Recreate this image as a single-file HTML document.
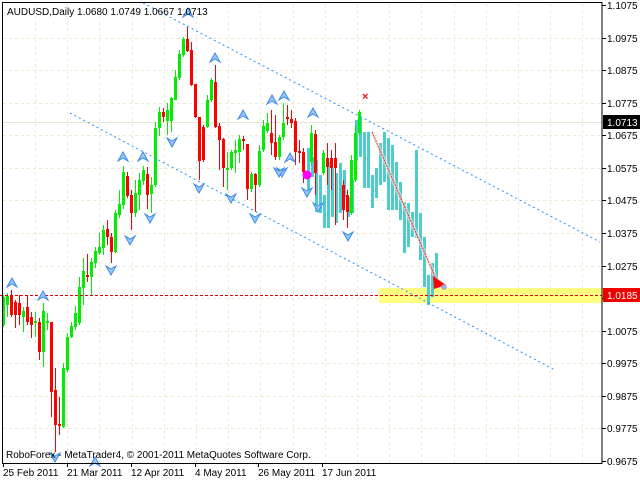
<!DOCTYPE html>
<html><head><meta charset="utf-8"><style>
html,body{margin:0;padding:0;background:#fff;width:640px;height:480px;overflow:hidden}
svg{display:block}
text{font-family:"Liberation Sans",sans-serif;font-size:10px;fill:#000}
</style></head><body>
<svg id="s" width="640" height="480" xmlns="http://www.w3.org/2000/svg">
<g id="grid" stroke="#ecebd2" stroke-width="1" stroke-dasharray="3,3"></g>
<rect x="379" y="288" width="223" height="15" fill="#ffff80"/>
<line x1="2" y1="122.5" x2="602" y2="122.5" stroke="#e6e6d0"/>
<g id="cy" fill="#4ccccc"></g>
<g id="cd"></g>
<line x1="143" y1="3" x2="600" y2="242" stroke="#1e90ff" stroke-dasharray="2,3"/>
<line x1="70" y1="113" x2="555" y2="370" stroke="#1e90ff" stroke-dasharray="2,3"/>
<line x1="0" y1="295.5" x2="602" y2="295.5" stroke="#e00000" stroke-dasharray="3,2"/>
<line x1="372" y1="132" x2="437" y2="281" stroke="#e8e8d8" stroke-width="4" opacity="0.6"/>
<line x1="372" y1="132" x2="437" y2="281" stroke="#ff2040" stroke-dasharray="2,1"/>
<polygon points="433,276 446,285 434,289" fill="#ff0000"/>
<circle cx="444" cy="287" r="3" fill="#9aa0c8" opacity="0.8"/>
<text x="362" y="100" style="font-size:11px;font-weight:bold;fill:#ee1111">×</text>
<circle cx="307" cy="175" r="4.5" fill="#ff00ff"/>
<g id="ar"></g>
<rect x="2.5" y="2.5" width="599.5" height="461" fill="none" stroke="#000"/>
<text x="7" y="15">AUDUSD,Daily  1.0680 1.0749 1.0667 1.0713</text>
<text x="6" y="458">RoboForex - MetaTrader4, © 2001-2011 MetaQuotes Software Corp.</text>
<g id="ax"></g>
<rect x="603" y="115" width="37" height="14" fill="#000"/>
<text x="607" y="126" style="fill:#fff">1.0713</text>
<rect x="603" y="288" width="37" height="14" fill="#ee0000"/>
<text x="607" y="299" style="fill:#fff">1.0185</text>
</svg>
<script>
var NS="http://www.w3.org/2000/svg";
function el(p,t,a){var e=document.createElementNS(NS,t);for(var k in a)e.setAttribute(k,a[k]);document.getElementById(p).appendChild(e);return e;}
var labels=["1.1075","1.0975","1.0875","1.0775","1.0675","1.0575","1.0475","1.0375","1.0275","1.0175","1.0075","0.9975","0.9875","0.9775","0.9675"];
for(var i=0;i<labels.length;i++){var y=Math.round(5+i*32.57);
 if(i>0&&i<14)el("grid","line",{x1:3,y1:y+.5,x2:601,y2:y+.5});
 el("ax","line",{x1:602,y1:y+.5,x2:606,y2:y+.5,stroke:"#000"});
 if(i!=9){var t=el("ax","text",{x:607,y:y+4});t.textContent=labels[i];}}
for(var x=35;x<600;x+=32.2){el("grid","line",{x1:Math.round(x)+.5,y1:4,x2:Math.round(x)+.5,y2:463});}
var dates=[["25 Feb 2011",3],["21 Mar 2011",67],["12 Apr 2011",131],["4 May 2011",195],["26 May 2011",258],["17 Jun 2011",322]];
dates.forEach(function(d){var t=el("ax","text",{x:d[1],y:476});t.textContent=d[0];el("ax","line",{x1:d[1]+.5,y1:463,x2:d[1]+.5,y2:467,stroke:"#000"});});
var C=[[3,297,325,295,327,1],[7,296,305,293,317,1],[11,296,315,290,317,0],[15,302,315,300,328,0],[19,303,315,295,325,0],[23,311,317,307,332,1],[27,307,322,295,325,0],[31,317,325,312,338,0],[35,321,323,312,337,1],[39,322,352,318,360,0],[43,311,352,303,367,1],[47,321,323,313,330,1],[51,322,392,322,417,0],[55,390,425,368,452,0],[59,424,426,397,435,0],[63,368,427,363,428,1],[67,337,370,333,372,1],[71,326,337,322,338,1],[75,313,327,306,330,1],[79,287,323,277,325,1],[83,271,288,258,305,1],[87,275,277,254,282,0],[91,262,277,258,295,1],[95,251,263,247,268,1],[99,247,253,233,255,1],[103,230,248,225,255,1],[107,229,237,220,245,0],[111,237,252,233,263,0],[115,213,252,210,253,1],[119,204,215,190,218,1],[123,172,205,166,209,1],[127,176,196,172,198,0],[131,195,213,190,230,0],[135,193,213,180,217,1],[139,180,195,173,210,1],[143,170,181,166,185,1],[147,174,195,167,209,0],[151,185,194,177,213,1],[155,128,185,122,187,1],[159,112,128,107,136,1],[163,112,117,108,122,0],[167,110,121,103,135,1],[171,98,121,97,132,1],[175,77,100,70,100,1],[179,54,78,50,80,1],[183,39,55,37,57,1],[187,39,51,27,52,0],[191,50,85,42,86,0],[195,84,117,84,118,0],[199,117,161,117,180,0],[203,127,160,125,162,0],[207,100,127,95,128,1],[211,80,100,78,102,1],[215,82,127,65,128,0],[219,126,140,123,170,0],[223,139,168,138,187,0],[227,168,170,152,190,1],[231,152,168,150,170,1],[235,150,153,140,173,1],[239,139,152,135,163,1],[243,139,141,136,150,0],[247,144,189,144,200,0],[251,174,189,172,192,1],[255,174,185,173,212,0],[259,151,185,145,187,1],[263,126,150,120,152,1],[267,123,131,113,133,1],[271,133,143,110,155,0],[275,142,157,115,160,0],[279,137,157,135,160,1],[283,123,137,103,140,1],[287,117,119,105,125,0],[291,119,123,110,128,0],[295,121,152,118,165,0],[299,151,153,140,163,0],[303,152,172,148,183,0],[311,133,162,125,165,1],[315,134,173,130,195,0],[323,153,173,150,175,1],[327,158,167,143,185,0],[331,158,168,150,190,0],[335,158,168,143,225,0],[343,185,210,180,220,0],[347,195,212,190,228,0],[351,160,213,155,215,1],[355,133,180,125,182,1],[359,112,133,110,135,1]];
var Y=[[308,148,190],[312,157,177],[316,160,212],[320,175,213],[324,195,228],[328,162,228],[332,168,217],[336,173,223],[340,163,213],[344,170,197],[348,197,217],[352,180,213],[356,120,160],[360,117,157],[364,132,188],[368,132,188],[372,175,208],[376,168,198],[380,143,185],[384,132,182],[388,138,210],[392,145,210],[396,162,210],[400,182,220],[404,202,253],[408,203,247],[412,212,237],[416,150,238],[420,213,260],[424,237,287],[428,275,305],[432,263,297],[436,253,280]];
Y.forEach(function(b){el("cy","rect",{x:b[0]-1,y:b[1],width:3,height:b[2]-b[1]});});
C.forEach(function(c){var col=c[5]?"#00ee00":"#ff0000";
 el("cd","line",{x1:c[0]+.5,y1:c[3],x2:c[0]+.5,y2:c[4],stroke:col});
 el("cd","rect",{x:c[0]-1,y:c[1],width:3,height:Math.max(1,c[2]-c[1]),fill:col});});
var up=[[12,283],[43,296],[123,157],[143,157],[188,13],[215,58],[243,115],[272,100],[284,96],[313,113],[290,158],[95,462]];
var dn=[[172,142],[199,188],[231,198],[255,218],[111,270],[130,240],[150,218],[55,457],[282,172],[307,192],[318,207],[348,236],[279,172]];
up.forEach(function(p){el("ar","path",{d:"M"+p[0]+" "+(p[1]-5)+" L"+(p[0]+5)+" "+(p[1]+4)+" L"+p[0]+" "+(p[1]+1)+" L"+(p[0]-5)+" "+(p[1]+4)+"Z",fill:"#9cc8f8",stroke:"#3a88e8","stroke-width":1});});
dn.forEach(function(p){el("ar","path",{d:"M"+p[0]+" "+(p[1]+5)+" L"+(p[0]+5)+" "+(p[1]-4)+" L"+p[0]+" "+(p[1]-1)+" L"+(p[0]-5)+" "+(p[1]-4)+"Z",fill:"#9cc8f8",stroke:"#3a88e8","stroke-width":1});});
</script>
</body></html>
